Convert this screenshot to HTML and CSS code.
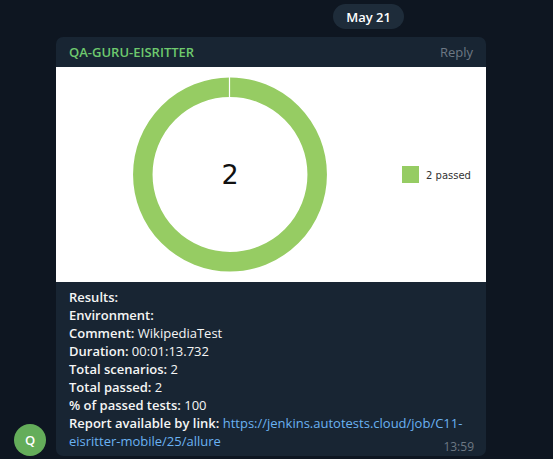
FILE: index.html
```html
<!DOCTYPE html>
<html>
<head>
<meta charset="utf-8">
<link rel="stylesheet" href="styles.css">
</head>
<body>
<div class="chat">
  <div class="date-row"><span class="date-pill">May 21</span></div>
  <div class="message-row">
    <div class="avatar">Q</div>
    <div class="bubble">
      <div class="bubble-head">
        <span class="sender">QA-GURU-EISRITTER</span>
        <span class="reply">Reply</span>
      </div>
      <svg class="chart" width="430" height="215" viewBox="0 0 430 215">
        <rect x="0" y="0" width="430" height="215" fill="#ffffff"/>
        <circle cx="174" cy="107.5" r="87.2" fill="none" stroke="#96cc63" stroke-width="19.5"/>
        <line x1="173.5" y1="10" x2="173.5" y2="30.5" stroke="#ffffff" stroke-width="1.2"/>
        <text x="174" y="117" text-anchor="middle" class="center-num">2</text>
        <rect x="346" y="99" width="17" height="17" fill="#96cc63"/>
        <text x="370" y="112" class="legend">2 passed</text>
      </svg>
      <div class="bubble-body">
        <div class="line"><b>Results:</b></div>
        <div class="line"><b>Environment:</b></div>
        <div class="line"><b>Comment:</b> WikipediaTest</div>
        <div class="line"><b>Duration:</b> 00:01:13.732</div>
        <div class="line"><b>Total scenarios:</b> 2</div>
        <div class="line"><b>Total passed:</b> 2</div>
        <div class="line"><b>% of passed tests:</b> 100</div>
        <div class="line"><b>Report available by link:</b> <a class="link" href="#">https://jenkins.autotests.cloud/job/C11-eisritter-mobile/25/allure</a></div>
        <span class="time">13:59</span>
      </div>
    </div>
  </div>
</div>
</body>
</html>
```
FILE: styles.css
```css
html, body {
  margin: 0;
  padding: 0;
  background: #0e1621;
  width: 553px;
  height: 459px;
  overflow: hidden;
  font-family: "Open Sans", "Noto Sans", sans-serif;
}
.chat {
  display: flex;
  flex-direction: column;
  padding-top: 4px;
}
.date-row {
  display: flex;
  justify-content: flex-end;
  padding-right: 149px;
  height: 33px;
}
.date-pill {
  display: flex;
  align-items: center;
  height: 25px;
  padding: 0 13px;
  border-radius: 13px;
  background: #1e2c3a;
  color: #ffffff;
  font-weight: 600;
  font-size: 13px;
  box-sizing: border-box;
}
.message-row {
  display: flex;
  align-items: flex-end;
  padding-left: 14px;
  gap: 10px;
}
.avatar {
  width: 32px;
  height: 32px;
  border-radius: 50%;
  background: #64ad5a;
  color: #ffffff;
  font-weight: 600;
  font-size: 13px;
  display: flex;
  align-items: center;
  justify-content: center;
}
.bubble {
  position: relative;
  width: 430px;
  background: #182533;
  border-radius: 7px;
  overflow: hidden;
}
.bubble-head {
  height: 30px;
  display: flex;
  align-items: center;
  justify-content: space-between;
  padding: 0 13px;
}
.sender {
  color: #6ec96e;
  font-weight: 600;
  font-size: 13px;
}
.reply {
  color: #6d7883;
  font-size: 13px;
}
.chart {
  display: block;
}
.center-num {
  font-family: "DejaVu Sans", sans-serif;
  font-size: 27px;
  fill: #111111;
}
.legend {
  font-family: "DejaVu Sans", sans-serif;
  font-size: 10px;
  fill: #333333;
}
.bubble-body {
  padding: 6px 10px 6px 13px;
  color: #f5f5f5;
  font-size: 13px;
  line-height: 18px;
}
.line b {
  font-weight: 600;
}
.link {
  color: #6ab2f2;
  text-decoration: none;
}
.time {
  position: absolute;
  right: 12px;
  bottom: 0;
  color: #6d7883;
  font-size: 12px;
}
```
